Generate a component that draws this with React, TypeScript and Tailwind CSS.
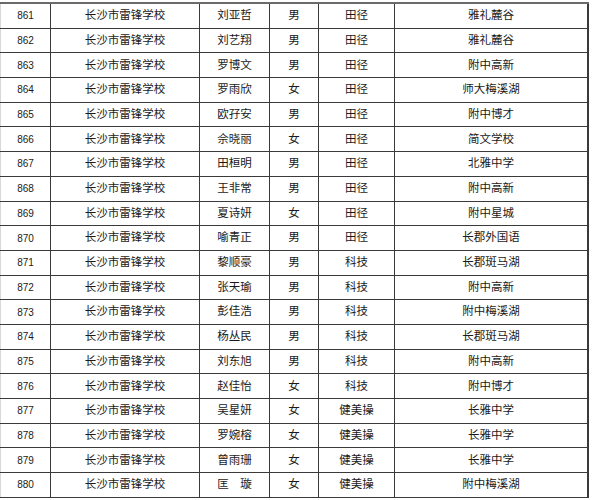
const rows: [string, string, string, string, string][] = [
  ['861', '刘亚哲', '男', '田径', '雅礼麓谷'],
  ['862', '刘艺翔', '男', '田径', '雅礼麓谷'],
  ['863', '罗博文', '男', '田径', '附中高新'],
  ['864', '罗雨欣', '女', '田径', '师大梅溪湖'],
  ['865', '欧孖安', '男', '田径', '附中博才'],
  ['866', '佘晓丽', '女', '田径', '简文学校'],
  ['867', '田桓明', '男', '田径', '北雅中学'],
  ['868', '王非常', '男', '田径', '附中高新'],
  ['869', '夏诗妍', '女', '田径', '附中星城'],
  ['870', '喻青正', '男', '田径', '长郡外国语'],
  ['871', '黎顺豪', '男', '科技', '长郡斑马湖'],
  ['872', '张天瑜', '男', '科技', '附中高新'],
  ['873', '彭佳浩', '男', '科技', '附中梅溪湖'],
  ['874', '杨丛民', '男', '科技', '长郡斑马湖'],
  ['875', '刘东旭', '男', '科技', '附中高新'],
  ['876', '赵佳怡', '女', '科技', '附中博才'],
  ['877', '吴星妍', '女', '健美操', '长雅中学'],
  ['878', '罗婉榕', '女', '健美操', '长雅中学'],
  ['879', '曾雨珊', '女', '健美操', '长雅中学'],
  ['880', '匡　璇', '女', '健美操', '附中梅溪湖'],
]

const cell = 'flex items-center justify-center border-r border-[#3a3a3a]'

export default function App() {
  return (
    <div className="h-[500px] w-[593px] overflow-hidden bg-white pt-[2px] text-[#1a1a1a] [font-family:'Liberation_Sans','Noto_Sans_CJK_SC',sans-serif]">
      <div className="w-[589px] border-t-2 border-[#6a6a6a]">
        {rows.map(([no, name, sex, sport, dest]) => (
          <div
            key={no}
            className="grid h-[24.7px] grid-cols-[51px_149px_70px_49px_76px_194px] border-b border-[#3a3a3a] text-[11.5px]"
          >
            <div className={`${cell} border-l border-l-[#d8d8d8] text-[10px]`}>{no}</div>
            <div className={cell}>长沙市雷锋学校</div>
            <div className={cell}>{name}</div>
            <div className={cell}>{sex}</div>
            <div className={cell}>{sport}</div>
            <div className={`${cell} border-r-2`}>{dest}</div>
          </div>
        ))}
      </div>
    </div>
  )
}
